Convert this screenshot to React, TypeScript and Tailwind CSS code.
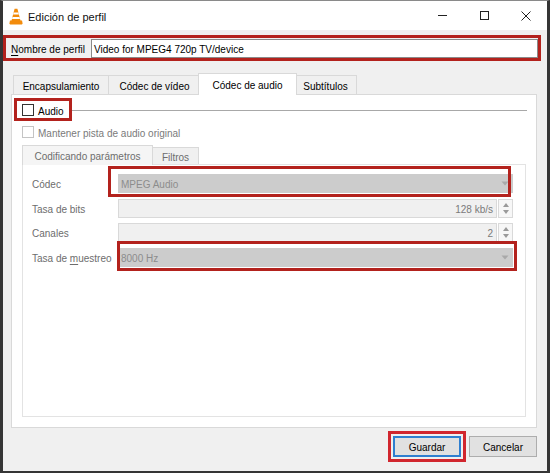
import React from "react";

function T({ children }: { children: React.ReactNode }) {
  return <span className="relative top-[1.5px]">{children}</span>;
}

function Cone() {
  return (
    <svg width="14" height="17" viewBox="0 0 14 17">
      <path d="M5.6 0.8 L8.4 0.8 L11.6 13 L2.4 13 Z" fill="#f28b0c" />
      <path d="M4.6 4.6 L9.4 4.6 L9.9 6.6 L4.1 6.6 Z" fill="#ffffff" />
      <path d="M3.5 8.9 L10.5 8.9 L11 10.9 L3 10.9 Z" fill="#ffffff" />
      <path d="M1 12.6 L13 12.6 L13.6 15.6 Q13.6 16.4 12.8 16.4 L1.2 16.4 Q0.4 16.4 0.4 15.6 Z" fill="#f28b0c" />
    </svg>
  );
}

function Check({ disabled }: { disabled?: boolean }) {
  return (
    <div
      className={
        disabled
          ? "w-[12px] h-[12px] border border-[#c4c4c4] bg-white shrink-0"
          : "w-[12px] h-[12px] border border-[#333333] bg-white shrink-0"
      }
    />
  );
}

function DownArrow() {
  return (
    <svg width="8" height="5" viewBox="0 0 8 5">
      <path d="M0.5 0.5 L7.5 0.5 L4 4.5 Z" fill="#a9a9a9" />
    </svg>
  );
}

function Spinner() {
  return (
    <div className="w-[15px] h-full flex flex-col items-center justify-center gap-[3px] border border-[#d9d9d9] bg-[#f7f7f7] ml-[1px]">
      <svg width="6" height="4" viewBox="0 0 6 4">
        <path d="M0 4 L6 4 L3 0 Z" fill="#9a9a9a" />
      </svg>
      <svg width="6" height="4" viewBox="0 0 6 4">
        <path d="M0 0 L6 0 L3 4 Z" fill="#9a9a9a" />
      </svg>
    </div>
  );
}

export default function App() {
  return (
    <div className="w-[550px] h-[473px] bg-[#f0f0f0] border-t border-t-[#8a8a8a] border-x-[3px] border-x-[#353535] border-b-[2px] border-b-[#353535] flex flex-col font-['Liberation_Sans',Arial,sans-serif] text-[10px] text-black leading-none overflow-hidden">
      {/* Title bar */}
      <div className="h-[29px] bg-white flex items-center shrink-0">
        <div className="pl-[6px] pt-[1px]">
          <Cone />
        </div>
        <div className="ml-[5px] text-[11px] text-[#111]">
          <T>Edición de perfil</T>
        </div>
        <div className="ml-auto flex h-full">
          <div className="w-[42px] h-full flex items-center justify-center">
            <div className="w-[9px] h-px bg-[#222]" />
          </div>
          <div className="w-[42px] h-full flex items-center justify-center">
            <div className="w-[9px] h-[9px] border border-[#222]" />
          </div>
          <div className="w-[42px] h-full flex items-center justify-center">
            <svg width="10" height="10" viewBox="0 0 10 10">
              <path d="M0.5 0.5 L9.5 9.5 M9.5 0.5 L0.5 9.5" stroke="#222" strokeWidth="1" />
            </svg>
          </div>
        </div>
      </div>

      {/* Name row */}
      <div className="mt-[5px] w-[538px] h-[26px] border-[3px] border-[#b3221d] flex items-center shrink-0">
        <div className="pl-[5px] w-[85px]">
          <T>
            <span className="underline underline-offset-[2px]">N</span>ombre de perfil
          </T>
        </div>
        <div className="w-[447px] h-[19px] border border-[#8a8a8a] bg-white flex items-center pl-[2px]">
          <T>Video for MPEG4 720p TV/device</T>
        </div>
      </div>

      {/* Tabs */}
      <div className="mt-[12px] ml-[8px] w-[526px] flex flex-col shrink-0">
        <div className="h-[21px] flex items-end pl-[2px]">
          <div className="w-[95px] h-[19px] border-t border-l border-[#d9d9d9] bg-[#f0f0f0] flex items-center justify-center">
            <T>Encapsulamiento</T>
          </div>
          <div className="w-[92px] h-[19px] border-t border-l border-[#d9d9d9] bg-[#f0f0f0] flex items-center justify-center">
            <T>Códec de vídeo</T>
          </div>
          <div className="relative z-10 -mx-[2px] -mb-px w-[99px] h-[22px] border border-b-0 border-[#d9d9d9] bg-white flex items-center justify-center pb-[1px]">
            <T>Códec de audio</T>
          </div>
          <div className="w-[62px] h-[19px] border-t border-r border-[#d9d9d9] bg-[#f0f0f0] flex items-center justify-center">
            <T>Subtítulos</T>
          </div>
        </div>

        <div className="relative h-[334px] border border-[#d9d9d9] bg-white flex flex-col">
          {/* Audio red annotation */}
          <div className="absolute left-[2px] top-[3px] w-[58px] h-[23px] border-[3px] border-[#b3221d]" />

          <div className="mt-[9px] h-[12px] flex items-center pl-[10px] pr-[9px]">
            <Check />
            <span className="ml-[4px]">
              <T>Audio</T>
            </span>
            <div className="ml-[8px] flex-1 h-px bg-[#a8a8a8]" />
          </div>

          <div className="mt-[10px] h-[12px] flex items-center pl-[10px] text-[#7a7a7a]">
            <Check disabled />
            <span className="ml-[4px]">
              <T>Mantener pista de audio original</T>
            </span>
          </div>

          {/* Inner tabs */}
          <div className="mt-[7px] mx-[10px] mb-[10px] flex-1 flex flex-col">
            <div className="h-[19px] flex items-end text-[#6d6d6d]">
              <div className="relative z-10 -mb-px w-[131px] h-[20px] border border-b-0 border-[#d9d9d9] bg-[#f5f5f5] flex items-center justify-center pb-[1px]">
                <T>Codificando parámetros</T>
              </div>
              <div className="w-[46px] h-[17px] border-t border-r border-[#d9d9d9] bg-[#f0f0f0] flex items-center justify-center">
                <T>Filtros</T>
              </div>
            </div>
            <div className="relative flex-1 border border-[#e3e3e3] bg-white flex flex-col pt-[9px] pl-[9px] pr-[12px] gap-[5.5px] text-[#6d6d6d]">
              {/* red annotations */}
              <div className="absolute left-[85px] top-[1px] w-[403px] h-[31px] border-[3px] border-[#b3221d] z-10" />
              <div className="absolute left-[94px] top-[76px] w-[400px] h-[30px] border-[3px] border-[#b3221d] z-10" />

              <div className="h-[19px] flex items-center">
                <div className="w-[86px]">
                  <T>Códec</T>
                </div>
                <div className="flex-1 h-full bg-[#cccccc] flex items-center pl-[3px] pr-[4px] text-[#8c8c8c]">
                  <T>MPEG Audio</T>
                  <span className="ml-auto">
                    <DownArrow />
                  </span>
                </div>
              </div>

              <div className="h-[19px] flex items-center">
                <div className="w-[86px]">
                  <T>Tasa de bits</T>
                </div>
                <div className="flex-1 h-full flex">
                  <div className="flex-1 h-full bg-[#f0f0f0] border border-[#d9d9d9] flex items-center justify-end pr-[3px] text-[#7a7a7a]">
                    <T>128 kb/s</T>
                  </div>
                  <Spinner />
                </div>
              </div>

              <div className="h-[19px] flex items-center">
                <div className="w-[86px]">
                  <T>Canales</T>
                </div>
                <div className="flex-1 h-full flex">
                  <div className="flex-1 h-full bg-[#f0f0f0] border border-[#d9d9d9] flex items-center justify-end pr-[3px] text-[#7a7a7a]">
                    <T>2</T>
                  </div>
                  <Spinner />
                </div>
              </div>

              <div className="h-[19px] flex items-center">
                <div className="w-[86px]">
                  <T>
                    Tasa de <span className="underline underline-offset-[2px]">m</span>uestreo
                  </T>
                </div>
                <div className="flex-1 h-full bg-[#cccccc] flex items-center pl-[3px] pr-[4px] text-[#8c8c8c]">
                  <T>8000 Hz</T>
                  <span className="ml-auto">
                    <DownArrow />
                  </span>
                </div>
              </div>
            </div>
          </div>
        </div>
      </div>

      {/* Buttons */}
      <div className="mt-[8px] flex justify-end gap-[8px] pr-[10px] shrink-0">
        <div className="relative">
          <div className="absolute -left-[5px] -top-[5px] -right-[5px] -bottom-[5px] border-[3px] border-[#d1262e]" />
          <div className="w-[68px] h-[21px] bg-[#e1e1e1] border-2 border-[#2f7fd0] flex items-center justify-center">
            <T>Guardar</T>
          </div>
        </div>
        <div className="w-[68px] h-[21px] bg-[#e1e1e1] border border-[#adadad] flex items-center justify-center">
          <T>Cancelar</T>
        </div>
      </div>
    </div>
  );
}
